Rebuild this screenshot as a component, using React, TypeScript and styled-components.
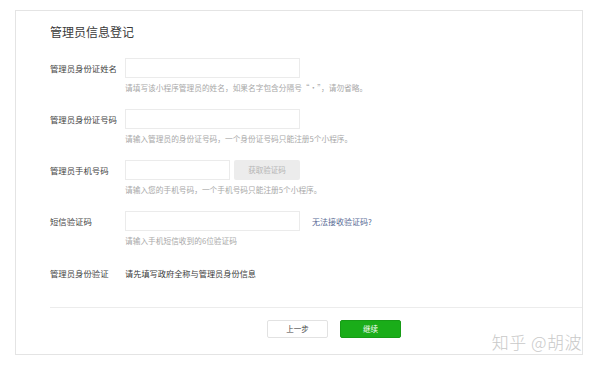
import styled, { createGlobalStyle } from "styled-components";

const GlobalStyle = createGlobalStyle`
  body {
    margin: 0;
    background: #ffffff;
    font-family: "Noto Sans CJK SC", "Noto Sans", sans-serif;
  }
`;

const Page = styled.div`
  padding: 10px 0 0 15px;
`;

const Card = styled.div`
  position: relative;
  width: 568px;
  height: 345px;
  box-sizing: border-box;
  border: 1px solid #e4e4e4;
  padding: 14px 0 0 34px;
`;

const Title = styled.div`
  font-size: 12px;
  line-height: 14px;
  color: #3a3a3a;
`;

const Form = styled.div`
  display: flex;
  flex-direction: column;
  gap: 15px;
  margin-top: 19px;
`;

const Field = styled.div<{ $top?: number }>`
  display: grid;
  grid-template-columns: 75px auto;
  margin-top: ${(p) => p.$top ?? 0}px;
`;

const Label = styled.div<{ $lh?: number }>`
  font-size: 8.4px;
  line-height: ${(p) => p.$lh ?? 20}px;
  color: #444;
  white-space: nowrap;
`;

const Control = styled.div`
  display: flex;
  flex-direction: column;
`;

const InputRow = styled.div`
  display: flex;
  align-items: center;
`;

const Input = styled.div<{ $w: number }>`
  width: ${(p) => p.$w}px;
  height: 20px;
  box-sizing: border-box;
  border: 1px solid #ebebeb;
  background: #fff;
`;

const CodeButton = styled.div`
  width: 66px;
  height: 20px;
  margin-left: 4px;
  background: #ececec;
  border-radius: 2px;
  color: #b5b5b5;
  font-size: 7.5px;
  line-height: 20px;
  text-align: center;
`;

const Link = styled.span`
  margin-left: 12px;
  font-size: 8px;
  color: #576b95;
  white-space: nowrap;
`;

const Hint = styled.div`
  margin-top: 4px;
  font-size: 7.7px;
  line-height: 12px;
  color: #a8a8a8;
  white-space: nowrap;
`;

const Value = styled.div`
  font-size: 8.2px;
  line-height: 12px;
  color: #3a3a3a;
  white-space: nowrap;
`;

const Divider = styled.div`
  margin-top: 28px;
  height: 1px;
  background: #ececec;
`;

const Actions = styled.div`
  display: flex;
  gap: 12px;
  margin-top: 12px;
  padding-left: 217px;
`;

const Button = styled.div<{ $primary?: boolean }>`
  width: 61px;
  height: 18px;
  box-sizing: border-box;
  border: 1px solid ${(p) => (p.$primary ? "#179b16" : "#e2e2e2")};
  background: ${(p) => (p.$primary ? "#1aad19" : "#fff")};
  color: ${(p) => (p.$primary ? "#fff" : "#444")};
  border-radius: 2px;
  font-size: 7.5px;
  line-height: 16px;
  text-align: center;
`;

const Watermark = styled.div`
  position: absolute;
  right: 0;
  bottom: 2px;
  font-size: 17px;
  font-weight: 300;
  line-height: 20px;
  color: #c9c9c9;
  white-space: nowrap;
  letter-spacing: 0.5px;
`;

export default function App() {
  return (
    <Page>
      <GlobalStyle />
      <Card>
        <Title>管理员信息登记</Title>
        <Form>
          <Field>
            <Label>管理员身份证姓名</Label>
            <Control>
              <Input $w={175} />
              <Hint>请填写该小程序管理员的姓名，如果名字包含分隔号“·”，请勿省略。</Hint>
            </Control>
          </Field>
          <Field>
            <Label>管理员身份证号码</Label>
            <Control>
              <Input $w={175} />
              <Hint>请输入管理员的身份证号码，一个身份证号码只能注册5个小程序。</Hint>
            </Control>
          </Field>
          <Field>
            <Label>管理员手机号码</Label>
            <Control>
              <InputRow>
                <Input $w={105} />
                <CodeButton>获取验证码</CodeButton>
              </InputRow>
              <Hint>请输入您的手机号码，一个手机号码只能注册5个小程序。</Hint>
            </Control>
          </Field>
          <Field>
            <Label>短信验证码</Label>
            <Control>
              <InputRow>
                <Input $w={175} />
                <Link>无法接收验证码?</Link>
              </InputRow>
              <Hint>请输入手机短信收到的6位验证码</Hint>
            </Control>
          </Field>
          <Field $top={5}>
            <Label $lh={12}>管理员身份验证</Label>
            <Value>请先填写政府全称与管理员身份信息</Value>
          </Field>
        </Form>
        <Divider />
        <Actions>
          <Button>上一步</Button>
          <Button $primary>继续</Button>
        </Actions>
        <Watermark>知乎 @胡波</Watermark>
      </Card>
    </Page>
  );
}
